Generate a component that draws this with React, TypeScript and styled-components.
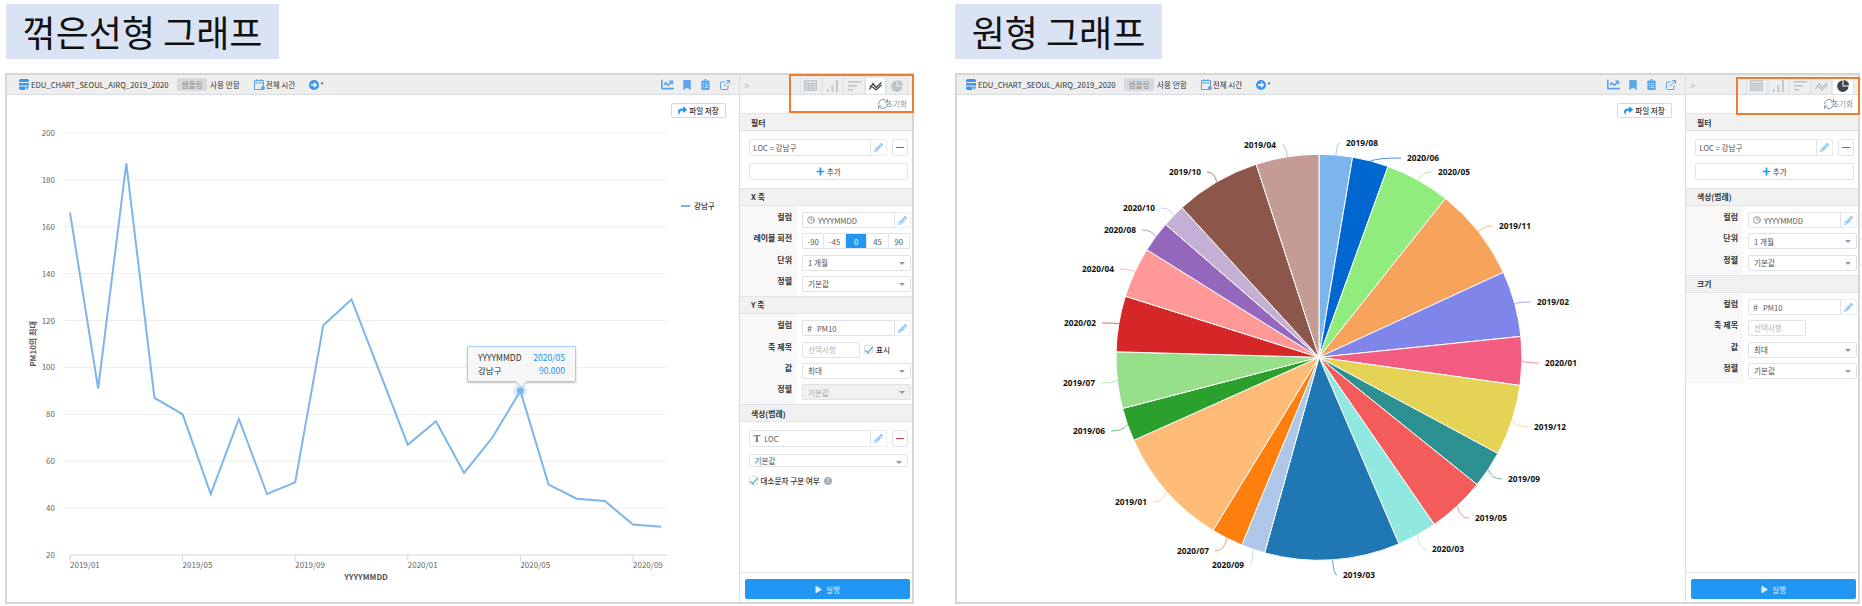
import styled, { createGlobalStyle } from "styled-components";
import { ReactNode } from "react";
import { FaPencilAlt, FaBookmark, FaShare, FaPlay, FaPlus, FaChartLine, FaClipboardList } from "react-icons/fa";
import { Clock, ExternalLink, RefreshCw } from "lucide-react";

const GlobalStyle = createGlobalStyle`
  html, body {
    margin: 0;
    background: #fff;
  }
  body {
    font-family: "Noto Sans CJK KR", "Noto Sans", sans-serif;
    font-size: 7.6px;
    color: #444;
  }
  * {
    box-sizing: border-box;
  }
`;

const months: Record<string, number> = {
  "2019/01": 166, "2019/02": 91, "2019/03": 187, "2019/04": 87, "2019/05": 80, "2019/06": 46,
  "2019/07": 78, "2019/08": 46, "2019/09": 51, "2019/10": 118, "2019/11": 129, "2019/12": 98,
  "2020/01": 67, "2020/02": 77, "2020/03": 55, "2020/04": 70, "2020/05": 90, "2020/06": 50,
  "2020/07": 44, "2020/08": 43, "2020/09": 33, "2020/10": 32,
};

// label: x = text edge nearest the pie, y = text centre, in page coordinates
const slices = [
  { key: "2019/08", color: "#7cb5ec", x: 1346, y: 143, side: "right" },
  { key: "2020/06", color: "#0066d0", x: 1407, y: 158, side: "right" },
  { key: "2020/05", color: "#90ed7d", x: 1438, y: 172, side: "right" },
  { key: "2019/11", color: "#f7a35c", x: 1499, y: 226, side: "right" },
  { key: "2019/02", color: "#8085e9", x: 1537, y: 302, side: "right" },
  { key: "2020/01", color: "#f15c80", x: 1545, y: 363, side: "right" },
  { key: "2019/12", color: "#e4d354", x: 1534, y: 427, side: "right" },
  { key: "2019/09", color: "#2b908f", x: 1508, y: 479, side: "right" },
  { key: "2019/05", color: "#f45b5b", x: 1475, y: 518, side: "right" },
  { key: "2020/03", color: "#91e8e1", x: 1432, y: 549, side: "right" },
  { key: "2019/03", color: "#1f77b4", x: 1343, y: 575, side: "right" },
  { key: "2020/09", color: "#aec7e8", x: 1244, y: 565, side: "left" },
  { key: "2020/07", color: "#ff7f0e", x: 1209, y: 551, side: "left" },
  { key: "2019/01", color: "#ffbb78", x: 1147, y: 502, side: "left" },
  { key: "2019/06", color: "#2ca02c", x: 1105, y: 431, side: "left" },
  { key: "2019/07", color: "#98df8a", x: 1095, y: 383, side: "left" },
  { key: "2020/02", color: "#d62728", x: 1096, y: 323, side: "left" },
  { key: "2020/04", color: "#ff9896", x: 1114, y: 269, side: "left" },
  { key: "2020/08", color: "#9467bd", x: 1136, y: 230, side: "left" },
  { key: "2020/10", color: "#c5b0d5", x: 1155, y: 208, side: "left" },
  { key: "2019/10", color: "#8c564b", x: 1201, y: 172, side: "left" },
  { key: "2019/04", color: "#c49c94", x: 1276, y: 145, side: "left" },
];

const yTicks = [200, 180, 160, 140, 120, 100, 80, 60, 40, 20];
const xTicks = ["2019/01", "2019/05", "2019/09", "2020/01", "2020/05", "2020/09"];
const keys = Object.keys(months);
const toX = (i: number) => 70 + i * 28.15;
const toY = (v: number) => 555 - (v - 20) * 2.345;

const LineChart = () => (
  <ChartSvg width={732} height={507} viewBox="7 95 732 507">
    {yTicks.map((t) => (
      <g key={t}>
        {t !== 20 && <GridLine x1={64} x2={667} y1={toY(t)} y2={toY(t)} />}
        <AxisText x={55} y={toY(t) + 3} textAnchor="end">{t}</AxisText>
      </g>
    ))}
    <AxisLine x1={70} x2={667} y1={555} y2={555} />
    {xTicks.map((k) => {
      const x = toX(keys.indexOf(k));
      return (
        <g key={k}>
          <AxisLine x1={x} x2={x} y1={555} y2={561} />
          <AxisText x={x} y={568}>{k}</AxisText>
        </g>
      );
    })}
    <AxisTitle x={366} y={580} textAnchor="middle">YYYYMMDD</AxisTitle>
    <AxisTitle x={36} y={344} textAnchor="middle" transform="rotate(-90 36 344)">PM10의 최대</AxisTitle>
    <polyline
      fill="none"
      stroke="#7cb5ec"
      strokeWidth={2}
      points={keys.map((k, i) => `${toX(i)},${toY(months[k])}`).join(" ")}
    />
    <circle cx={toX(16)} cy={toY(90)} r={7} fill="#7cb5ec" opacity={0.25} />
    <circle cx={toX(16)} cy={toY(90)} r={3.5} fill="#7cb5ec" />
    <line x1={681} x2={690} y1={206} y2={206} stroke="#7cb5ec" strokeWidth={2} />
    <LegendText x={694} y={209}>강남구</LegendText>
  </ChartSvg>
);

const PieChart = () => {
  const cx = 1319;
  const cy = 357.3;
  const r = 203;
  const total = slices.reduce((sum, s) => sum + months[s.key], 0);
  const point = (deg: number, radius: number) => {
    const a = (deg * Math.PI) / 180;
    return [cx + radius * Math.sin(a), cy - radius * Math.cos(a)];
  };
  let angle = 0;
  return (
    <ChartSvg width={728} height={507} viewBox="957 95 728 507">
      {slices.map((s) => {
        const sweep = (months[s.key] / total) * 360;
        const [x1, y1] = point(angle, r);
        const [x2, y2] = point(angle + sweep, r);
        const [sx, sy] = point(angle + sweep / 2, r);
        angle += sweep;
        const ex = s.side === "right" ? s.x - 6 : s.x + 6;
        const qx = sx + (ex - sx) * 0.25;
        return (
          <g key={s.key}>
            <path d={`M${cx} ${cy}L${x1} ${y1}A${r} ${r} 0 0 1 ${x2} ${y2}Z`} fill={s.color} stroke="#fff" strokeWidth={1} />
            <path d={`M${sx} ${sy}Q${qx} ${s.y} ${ex} ${s.y}`} fill="none" stroke={s.color} strokeOpacity={0.7} strokeWidth={1} />
            <PieText x={s.x} y={s.y + 3} textAnchor={s.side === "right" ? "start" : "end"}>{s.key}</PieText>
          </g>
        );
      })}
    </ChartSvg>
  );
};

const tabIcons = [
  <svg width="13" height="11" viewBox="0 0 13 11" fill="none" stroke="currentColor" strokeWidth="1">
    <path d="M.5.5h12v10H.5z" fill="currentColor" fillOpacity=".35" />
    <path d="M.5 3.500h12M.5 5.800h12M.5 8.100h12M4.500 3.500v7M8.500 3.500v7" />
  </svg>,
  <svg width="11" height="12" viewBox="0 0 11 12" fill="currentColor">
    <path d="M0 9h1.800v3H0zM4.500 5h1.800v7H4.500zM9 0h1.800v12H9z" />
  </svg>,
  <svg width="13" height="10" viewBox="0 0 13 10" fill="currentColor">
    <path d="M0 0h13v1.500H0zM0 4h9v1.500H0zM0 8h5v1.500H0z" />
  </svg>,
  <svg width="13" height="10" viewBox="0 0 13 10" fill="none" stroke="currentColor" strokeWidth="1.300">
    <path d="M.5 8.500l3.500-6 3 4 5.500-5M.5 5l3 1 3.500 3 5.500-5" />
  </svg>,
  <svg width="12" height="12" viewBox="0 0 12 12" fill="currentColor">
    <path d="M5.500.5v6h6a5.700 5.700 0 1 1-6-6zM6.500 0a5.500 5.500 0 0 1 5.500 5.500H6.500z" />
  </svg>,
];

const FieldIcon = () => (
  <PencilBox>
    <FaPencilAlt size={9} />
  </PencilBox>
);

const Dropdown = ({ children, disabled }: { children: ReactNode; disabled?: boolean }) => (
  <Select $disabled={disabled}>
    {children}
    <Caret />
  </Select>
);

const Field = ({ prefix, children }: { prefix?: ReactNode; children: ReactNode }) => (
  <FieldGroup>
    <TextBox>
      {prefix}
      {children}
    </TextBox>
    <FieldIcon />
  </FieldGroup>
);

const Row = ({ label, children }: { label: string; children: ReactNode }) => (
  <FormRow>
    <RowLabel>{label}</RowLabel>
    <RowField>{children}</RowField>
  </FormRow>
);

const Panel = ({ active, boxLeft, boxTop, boxHeight, children }: {
  active: number;
  boxLeft: number;
  boxTop: number;
  boxHeight: number;
  children: ReactNode;
}) => (
  <Side>
    <TabBar>
      <Collapse>»</Collapse>
      <Tabs>
        {tabIcons.map((icon, i) => (
          <Tab key={i} $active={i === active}>{icon}</Tab>
        ))}
      </Tabs>
    </TabBar>
    <ResetRow>
      <RefreshCw size={12} />
      <ResetText>초기화</ResetText>
    </ResetRow>
    <Highlight $left={boxLeft} $top={boxTop} $height={boxHeight} />
    <SectionHead>필터</SectionHead>
    <SectionBody>
      <FilterRow>
        <Field>LOC = 강남구</Field>
        <MinusBox />
      </FilterRow>
      <AddButton>
        <FaPlus size={9} color="#2196f3" />
        추가
      </AddButton>
    </SectionBody>
    {children}
  </Side>
);

const TimeIcon = () => <Clock size={8} color="#666" />;
const Hash = () => <Glyph>#</Glyph>;

const LinePanel = () => (
  <Panel active={3} boxLeft={49} boxTop={-1} boxHeight={39}>
    <SectionHead>X 축</SectionHead>
    <FormBody>
      <Row label="컬럼"><Field prefix={<TimeIcon />}>YYYYMMDD</Field></Row>
      <Row label="레이블 회전">
        <Segments>
          {["-90", "-45", "0", "45", "90"].map((v) => (
            <Segment key={v} $active={v === "0"}>{v}</Segment>
          ))}
        </Segments>
      </Row>
      <Row label="단위"><Dropdown>1 개월</Dropdown></Row>
      <Row label="정렬"><Dropdown>기본값</Dropdown></Row>
    </FormBody>
    <SectionHead>Y 축</SectionHead>
    <FormBody>
      <Row label="컬럼"><Field prefix={<Hash />}>PM10</Field></Row>
      <Row label="축 제목">
        <TitleInput>선택사항</TitleInput>
        <Check />
        <CheckText>표시</CheckText>
      </Row>
      <Row label="값"><Dropdown>최대</Dropdown></Row>
      <Row label="정렬"><Dropdown disabled>기본값</Dropdown></Row>
    </FormBody>
    <SectionHead>색상(범례)</SectionHead>
    <SectionBody>
      <FilterRow>
        <Field prefix={<SerifT>T</SerifT>}>LOC</Field>
        <MinusBox />
      </FilterRow>
      <Dropdown>기본값</Dropdown>
      <CaseRow>
        <Check />
        <CheckText>대소문자 구분 여부</CheckText>
        <Help>?</Help>
      </CaseRow>
    </SectionBody>
    <Footer>
      <RunButton><FaPlay size={7} />실행</RunButton>
    </Footer>
  </Panel>
);

const PiePanel = () => (
  <Panel active={4} boxLeft={50} boxTop={2} boxHeight={38}>
    <SectionHead>색상(범례)</SectionHead>
    <FormBody>
      <Row label="컬럼"><Field prefix={<TimeIcon />}>YYYYMMDD</Field></Row>
      <Row label="단위"><Dropdown>1 개월</Dropdown></Row>
      <Row label="정렬"><Dropdown>기본값</Dropdown></Row>
    </FormBody>
    <SectionHead>크기</SectionHead>
    <FormBody>
      <Row label="컬럼"><Field prefix={<Hash />}>PM10</Field></Row>
      <Row label="축 제목"><TitleInput>선택사항</TitleInput></Row>
      <Row label="값"><Dropdown>최대</Dropdown></Row>
      <Row label="정렬"><Dropdown>기본값</Dropdown></Row>
    </FormBody>
    <Spacer />
    <Footer>
      <RunButton><FaPlay size={7} />실행</RunButton>
    </Footer>
  </Panel>
);

const Toolbar = ({ inset }: { inset: number }) => (
  <TopBar $inset={inset}>
    <svg width="10" height="11" viewBox="0 0 11 11" fill="#3a97ee" preserveAspectRatio="none">
      <path d="M1 0h9l1 1.500V3H0V1.500zM0 4h11v2.500H0zM0 7.500h7V11H1.500L0 9.500zM7.500 7.500H11L9.200 11z" />
    </svg>
    <DataName>EDU_CHART_SEOUL_AIRQ_2019_2020</DataName>
    <Badge>샘플링</Badge>
    <BarText>사용 안함</BarText>
    <BarGap />
    <svg width="11" height="11" viewBox="0 0 11 11" fill="none" stroke="#5aa6ec">
      <path d="M8 10.500H.5v-9h9V7M.5 4h9M3 0v2.500M7 0v2.500" />
      <circle cx="9" cy="9" r="1.600" fill="#5aa6ec" />
    </svg>
    <BarText>전체 시간</BarText>
    <BarGap />
    <svg width="10" height="10" viewBox="0 0 10 10">
      <circle cx="5" cy="5" r="5" fill="#3a97ee" />
      <path d="M2 5h5M5 2.800L7.200 5 5 7.200" stroke="#fff" strokeWidth="1.300" fill="none" />
    </svg>
    <BarText>*</BarText>
    <BarIcons>
      <FaChartLine size={13} />
      <FaBookmark size={10} />
      <FaClipboardList size={11} />
      <ExternalLink size={12} />
    </BarIcons>
  </TopBar>
);

const App = () => (
  <>
    <GlobalStyle />
    <Page>
      <Column>
        <Title $indent={1} $width={273}>꺾은선형 그래프</Title>
        <Frame $width={909}>
          <ChartArea>
            <Toolbar inset={12} />
            <Canvas>
              <LineChart />
              <SaveButton><FaShare size={9} color="#2196f3" />파일 저장</SaveButton>
              <Tip>
                <TipRow><span>YYYYMMDD</span><TipValue>2020/05</TipValue></TipRow>
                <TipRow><span>강남구</span><TipValue>90.000</TipValue></TipRow>
              </Tip>
            </Canvas>
          </ChartArea>
          <LinePanel />
        </Frame>
      </Column>
      <Column>
        <Title $indent={0} $width={207}>원형 그래프</Title>
        <Frame $width={905}>
          <ChartArea>
            <Toolbar inset={9} />
            <Canvas>
              <PieChart />
              <SaveButton><FaShare size={9} color="#2196f3" />파일 저장</SaveButton>
            </Canvas>
          </ChartArea>
          <PiePanel />
        </Frame>
      </Column>
    </Page>
  </>
);

export default App;

const Page = styled.div`
  display: flex;
  gap: 41px;
  width: 1862px;
  height: 606px;
  padding-left: 5px;
  overflow: hidden;
`;

const Column = styled.div`
  display: flex;
  flex-direction: column;
  align-items: flex-start;
`;

const Title = styled.h1<{ $indent: number; $width: number }>`
  width: ${(p) => p.$width}px;
  height: 55px;
  margin: 4px 0 14px ${(p) => p.$indent}px;
  background: #dae3f3;
  color: #111;
  font: 400 36px/55px "Noto Sans CJK KR", sans-serif;
  text-align: center;
  white-space: nowrap;
`;

const Frame = styled.div<{ $width: number }>`
  display: flex;
  width: ${(p) => p.$width}px;
  height: 531px;
  border: 2px solid #d6d6d6;
`;

const ChartArea = styled.div`
  flex: 1;
  min-width: 0;
  display: flex;
  flex-direction: column;
`;

const TopBar = styled.div<{ $inset: number }>`
  display: flex;
  align-items: center;
  height: 20px;
  flex: none;
  padding: 0 8px 0 ${(p) => p.$inset}px;
  background: #eeeeee;
  border-bottom: 1px solid #d8dce3;
`;

const DataName = styled.span`
  width: 139px;
  margin: 0 7px 0 2px;
  color: #333;
  font-size: 7.7px;
  white-space: nowrap;
`;

const Badge = styled.span`
  width: 30px;
  height: 13px;
  margin-right: 2px;
  background: #d6d9dd;
  border-radius: 2px;
  color: #888;
  line-height: 13px;
  text-align: center;
`;

const BarText = styled.span`
  margin-left: 1px;
  color: #333;
  white-space: nowrap;
`;

const BarGap = styled.span`
  width: 14px;
`;

const BarIcons = styled.div`
  display: flex;
  align-items: center;
  gap: 8px;
  margin-left: auto;
  color: #5aa6ec;
`;

const Canvas = styled.div`
  position: relative;
  flex: 1;
`;

const ChartSvg = styled.svg`
  display: block;
  font-family: "Noto Sans CJK KR", "Noto Sans", sans-serif;
`;

const GridLine = styled.line`
  stroke: #eeeeee;
  stroke-width: 1;
`;

const AxisLine = styled.line`
  stroke: #ccd6eb;
  stroke-width: 1;
`;

const AxisText = styled.text`
  fill: #666;
  font-size: 8px;
`;

const AxisTitle = styled.text`
  fill: #555;
  font-size: 8px;
  font-weight: 700;
`;

const LegendText = styled.text`
  fill: #333;
  font-size: 7.5px;
  font-weight: 500;
`;

const PieText = styled.text`
  fill: #111;
  font-family: "Noto Sans", sans-serif;
  font-size: 8.3px;
  font-weight: 700;
`;

const SaveButton = styled.button`
  position: absolute;
  top: 8px;
  right: 13px;
  display: flex;
  align-items: center;
  justify-content: center;
  gap: 2px;
  width: 55px;
  height: 15px;
  padding: 0;
  background: #fff;
  border: 1px solid #d5d9e0;
  border-radius: 2px;
  color: #333;
  font: 500 7.6px "Noto Sans CJK KR", sans-serif;
`;

const Tip = styled.div`
  position: absolute;
  left: 460px;
  top: 251px;
  width: 109px;
  height: 36px;
  padding: 4px 10px;
  background: #f7f7f7;
  border: 1px solid #a9cdee;
  border-radius: 2px;
  box-shadow: 0 1px 2px rgba(0, 0, 0, 0.25);
  font-size: 8.5px;
  color: #333;

  &::after {
    content: "";
    position: absolute;
    left: 49px;
    bottom: -5px;
    width: 8px;
    height: 8px;
    background: #f7f7f7;
    border-right: 1px solid #a9cdee;
    border-bottom: 1px solid #a9cdee;
    transform: rotate(45deg);
  }
`;

const TipRow = styled.div`
  display: flex;
  justify-content: space-between;
  line-height: 13px;
`;

const TipValue = styled.span`
  color: #2196f3;
`;

const Side = styled.aside`
  position: relative;
  display: flex;
  flex-direction: column;
  flex: none;
  width: 173px;
  border-left: 1px solid #d8dce3;
`;

const TabBar = styled.div`
  display: flex;
  align-items: flex-end;
  justify-content: space-between;
  flex: none;
  height: 19.5px;
  padding: 0 4px 0 4px;
  background: #eeeeee;
  border-bottom: 1px solid #dcdfe3;
`;

const Collapse = styled.span`
  align-self: center;
  color: #b8c2cc;
  font-size: 11px;
`;

const Tabs = styled.div`
  display: flex;
`;

const Tab = styled.span<{ $active: boolean }>`
  display: flex;
  align-items: center;
  justify-content: center;
  width: 21.6px;
  height: 17px;
  background: ${(p) => (p.$active ? "#fff" : "#eeeeee")};
  border: 1px solid #e2e4e8;
  border-bottom: none;
  color: ${(p) => (p.$active ? "#3c4650" : "#bcc4cc")};
`;

const ResetRow = styled.div`
  display: flex;
  align-items: center;
  justify-content: flex-end;
  flex: none;
  height: 18.5px;
  padding-right: 5px;
  color: #8398aa;
`;

const ResetText = styled.span`
  margin-left: -3px;
`;

const Highlight = styled.div<{ $left: number; $top: number; $height: number }>`
  position: absolute;
  left: ${(p) => p.$left}px;
  top: ${(p) => p.$top}px;
  right: -2px;
  height: ${(p) => p.$height}px;
  border: 2px solid #ed7d31;
  pointer-events: none;
`;

const SectionHead = styled.div`
  display: flex;
  align-items: center;
  flex: none;
  height: 18px;
  padding-left: 11px;
  background: #f1f1f1;
  border-top: 1px solid #e2e4e8;
  border-bottom: 1px solid #e2e4e8;
  color: #333;
  font-size: 7.8px;
  font-weight: 700;
`;

const SectionBody = styled.div`
  display: flex;
  flex-direction: column;
  gap: 7px;
  padding: 8px 4px 8px 8.500px;
`;

const FormBody = styled.div`
  display: flex;
  flex-direction: column;
  gap: 5.300px;
  padding: 6.500px 1px 4px 0;
  background: linear-gradient(90deg, #f8f8f8 57px, #fff 57px);
`;

const FormRow = styled.div`
  display: flex;
  height: 16px;
`;

const RowLabel = styled.div`
  flex: none;
  width: 57px;
  padding-right: 5px;
  color: #333;
  font-size: 8px;
  font-weight: 700;
  line-height: 10px;
  text-align: right;
`;

const RowField = styled.div`
  flex: 1;
  min-width: 0;
  display: flex;
  align-items: center;
  padding-left: 5px;
`;

const FilterRow = styled.div`
  display: flex;
  gap: 4.500px;
  height: 17px;
`;

const FieldGroup = styled.div`
  flex: 1;
  min-width: 0;
  display: flex;
  height: 100%;
`;

const TextBox = styled.div`
  flex: 1;
  display: flex;
  align-items: center;
  gap: 3px;
  min-width: 0;
  padding-left: 4px;
  background: #fff;
  border: 1px solid #dfe2e6;
  border-radius: 2px 0 0 2px;
  color: #555;
  white-space: nowrap;
`;

const PencilBox = styled.span`
  display: flex;
  align-items: center;
  justify-content: center;
  flex: none;
  width: 16px;
  background: #fff;
  border: 1px solid #eceef1;
  border-left: none;
  color: #90c4f4;
`;

const MinusBox = styled.span`
  position: relative;
  flex: none;
  width: 16.500px;
  background: #fff;
  border: 1px solid #dfe2e6;
  border-radius: 2px;

  &::after {
    content: "";
    position: absolute;
    left: 3px;
    right: 3px;
    top: 6.500px;
    height: 1.500px;
    background: #e8413e;
  }
`;

const AddButton = styled.div`
  display: flex;
  align-items: center;
  justify-content: center;
  gap: 2px;
  height: 16.500px;
  background: #fff;
  border: 1px solid #dfe2e6;
  border-radius: 2px;
  color: #444;
`;

const Select = styled.div<{ $disabled?: boolean }>`
  flex: 1;
  position: relative;
  display: flex;
  align-items: center;
  height: 16px;
  padding-left: 5px;
  background: ${(p) => (p.$disabled ? "#f0f0f0" : "#fff")};
  border: 1px solid #dfe2e6;
  border-radius: 2px;
  color: ${(p) => (p.$disabled ? "#aaa" : "#555")};
`;

const Caret = styled.span`
  position: absolute;
  right: 5px;
  top: 6px;
  border-left: 3px solid transparent;
  border-right: 3px solid transparent;
  border-top: 3px solid #8a9bb0;
`;

const Segments = styled.div`
  display: flex;
  width: 108px;
  height: 16px;
  border: 1px solid #dfe2e6;
  border-radius: 2px;
`;

const Segment = styled.span<{ $active: boolean }>`
  flex: 1;
  display: flex;
  align-items: center;
  justify-content: center;
  background: ${(p) => (p.$active ? "#2196f3" : "#fff")};
  color: ${(p) => (p.$active ? "#fff" : "#555")};

  & + & {
    border-left: 1px solid #e4e6ea;
  }
`;

const TitleInput = styled.div`
  width: 58px;
  height: 16px;
  padding-left: 5px;
  background: #fff;
  border: 1px solid #dfe2e6;
  border-radius: 2px;
  color: #b5b5b5;
  line-height: 14px;
`;

const Check = styled.span`
  position: relative;
  flex: none;
  width: 9px;
  height: 9px;
  margin-left: 4px;
  background: #fff;
  border: 1px solid #dde1e6;
  border-radius: 1px;

  &::after {
    content: "";
    position: absolute;
    left: 2px;
    top: -1px;
    width: 3px;
    height: 7px;
    border-right: 1.400px solid #2196f3;
    border-bottom: 1.400px solid #2196f3;
    transform: rotate(40deg);
  }
`;

const CheckText = styled.span`
  margin-left: 3px;
  color: #333;
  font-weight: 500;
  white-space: nowrap;
`;

const CaseRow = styled.div`
  display: flex;
  align-items: center;
  margin: 1px 0 0 -4px;
`;

const Help = styled.span`
  width: 8px;
  height: 8px;
  margin-left: 4px;
  background: #a5adb5;
  border-radius: 50%;
  color: #fff;
  font-size: 6px;
  line-height: 8px;
  text-align: center;
`;

const Glyph = styled.span`
  margin-right: 2px;
  color: #666;
  font-size: 9px;
`;

const SerifT = styled.span`
  margin-right: 1px;
  color: #666;
  font: 700 10px "Liberation Serif", serif;
`;

const Spacer = styled.div`
  flex: 1;
`;

const Footer = styled.div`
  margin-top: auto;
  padding: 6px 2px 3px 5px;
  border-top: 1px solid #e2e4e8;
`;

const RunButton = styled.div`
  display: flex;
  align-items: center;
  justify-content: center;
  gap: 4px;
  height: 20px;
  background: #2196f3;
  border-radius: 2px;
  color: #dcecfb;
`;
